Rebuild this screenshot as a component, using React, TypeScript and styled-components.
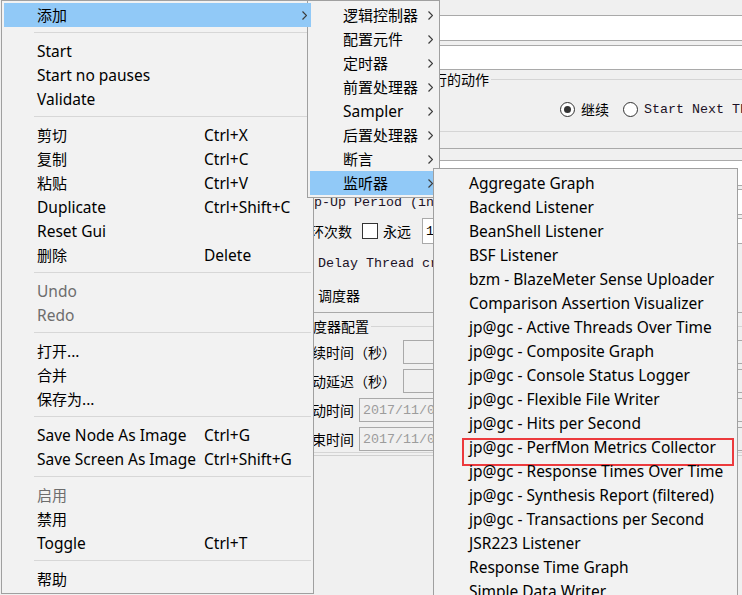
import React from "react";
import styled, { createGlobalStyle, css } from "styled-components";

const UI_FONT = `"Noto Sans", "Noto Sans CJK SC", sans-serif`;
const CJK_FONT = `"Noto Sans CJK SC", "Noto Sans", sans-serif`;
const MONO_FONT = `"Liberation Mono", "Noto Sans CJK SC", monospace`;

const HILITE = "#91c9f7";

const GlobalStyle = createGlobalStyle`
  * { box-sizing: border-box; }
  html, body { margin: 0; padding: 0; background: #f0f0f0; overflow: hidden; }
  #root { width: 742px; height: 595px; }
`;

type Entry =
  | { sep: true }
  | {
      sep?: false;
      text: string;
      keys?: string;
      arrow?: boolean;
      active?: boolean;
      disabled?: boolean;
      marked?: boolean;
    };

const SEP: Entry = { sep: true };

const mainMenu: Entry[] = [
  { text: "添加", arrow: true, active: true },
  SEP,
  { text: "Start" },
  { text: "Start no pauses" },
  { text: "Validate" },
  SEP,
  { text: "剪切", keys: "Ctrl+X" },
  { text: "复制", keys: "Ctrl+C" },
  { text: "粘贴", keys: "Ctrl+V" },
  { text: "Duplicate", keys: "Ctrl+Shift+C" },
  { text: "Reset Gui" },
  { text: "删除", keys: "Delete" },
  SEP,
  { text: "Undo", disabled: true },
  { text: "Redo", disabled: true },
  SEP,
  { text: "打开..." },
  { text: "合并" },
  { text: "保存为..." },
  SEP,
  { text: "Save Node As Image", keys: "Ctrl+G" },
  { text: "Save Screen As Image", keys: "Ctrl+Shift+G" },
  SEP,
  { text: "启用", disabled: true },
  { text: "禁用" },
  { text: "Toggle", keys: "Ctrl+T" },
  SEP,
  { text: "帮助" },
];

const addMenu: Entry[] = [
  { text: "逻辑控制器", arrow: true },
  { text: "配置元件", arrow: true },
  { text: "定时器", arrow: true },
  { text: "前置处理器", arrow: true },
  { text: "Sampler", arrow: true },
  { text: "后置处理器", arrow: true },
  { text: "断言", arrow: true },
  { text: "监听器", arrow: true, active: true },
];

const listenerMenu: Entry[] = [
  "Aggregate Graph",
  "Backend Listener",
  "BeanShell Listener",
  "BSF Listener",
  "bzm - BlazeMeter Sense Uploader",
  "Comparison Assertion Visualizer",
  "jp@gc - Active Threads Over Time",
  "jp@gc - Composite Graph",
  "jp@gc - Console Status Logger",
  "jp@gc - Flexible File Writer",
  "jp@gc - Hits per Second",
  "jp@gc - PerfMon Metrics Collector",
  "jp@gc - Response Times Over Time",
  "jp@gc - Synthesis Report (filtered)",
  "jp@gc - Transactions per Second",
  "JSR223 Listener",
  "Response Time Graph",
  "Simple Data Writer",
].map((text) => ({ text, marked: text.includes("PerfMon") }));

const isCjk = (s: string) => /[\u4e00-\u9fff]/.test(s);

/* ---------- background window (JMeter thread group form) ---------- */

const Window = styled.div`
  position: relative;
  display: flex;
  width: 742px;
  height: 595px;
  overflow: hidden;
  background: #f0f0f0;
`;

const TreePane = styled.div`
  flex: none;
  width: 280px;
  background: #f0f0f0;
`;

const FormPane = styled.div`
  flex: none;
  width: 540px;
  padding-left: 8px;
  display: flex;
  flex-direction: column;
`;

const Row = styled.div<{ $mt?: number; $h?: number }>`
  display: flex;
  align-items: center;
  flex: none;
  margin-top: ${({ $mt }) => $mt ?? 0}px;
  height: ${({ $h }) => $h ?? 26}px;
`;

const Label = styled.span<{ $ml?: number }>`
  flex: none;
  margin-left: ${({ $ml }) => $ml ?? 0}px;
  font-family: ${CJK_FONT};
  font-size: 14px;
  color: #000;
  white-space: nowrap;
`;

const MonoLabel = styled.span<{ $ml?: number }>`
  flex: none;
  margin-left: ${({ $ml }) => $ml ?? 0}px;
  font-family: ${MONO_FONT};
  font-size: 13.33px;
  color: #1c1226;
  white-space: nowrap;
`;

const TextField = styled.div<{ $disabled?: boolean; $gap?: number }>`
  flex: 1;
  align-self: stretch;
  display: flex;
  align-items: center;
  margin-left: ${({ $gap }) => $gap ?? 0}px;
  padding-left: 3px;
  border: 1px solid #a9a9a9;
  background: ${({ $disabled }) => ($disabled ? "#f0f0f0" : "#ffffff")};
  font-family: ${MONO_FONT};
  font-size: 13.33px;
  color: ${({ $disabled }) => ($disabled ? "#9c9c9c" : "#000")};
  white-space: nowrap;
  overflow: hidden;
`;

const GroupBox = styled.fieldset<{ $mt: number; $pt: number; $pb: number; $line: string }>`
  margin: ${({ $mt }) => $mt}px 0 0 0;
  padding: ${({ $pt }) => $pt}px 9px ${({ $pb }) => $pb}px 9px;
  min-width: 0;
  border: 1px solid ${({ $line }) => $line};
`;

const Legend = styled.legend<{ $indent: number }>`
  margin-left: ${({ $indent }) => $indent}px;
  padding: 0 2px;
  font-family: ${CJK_FONT};
  font-size: 14px;
  line-height: 17px;
  color: #000;
`;

const RadioRow = styled.div`
  display: flex;
  align-items: center;
  height: 20px;
  padding-left: 262px;
`;

const RadioOption = styled.label`
  display: flex;
  align-items: center;
  gap: 6px;
  margin-right: 14px;
  white-space: nowrap;
`;

const Radio = styled.span<{ $checked?: boolean }>`
  flex: none;
  display: inline-flex;
  align-items: center;
  justify-content: center;
  width: 15px;
  height: 15px;
  border: 1px solid #333;
  border-radius: 50%;
  background: #fff;

  &::after {
    content: "";
    display: ${({ $checked }) => ($checked ? "block" : "none")};
    width: 7px;
    height: 7px;
    border-radius: 50%;
    background: #333;
  }
`;

const Check = styled.span<{ $ml?: number }>`
  flex: none;
  width: 16px;
  height: 16px;
  margin-left: ${({ $ml }) => $ml ?? 0}px;
  border: 1px solid #333;
  background: #fff;
`;

const Rule = styled.div`
  flex: none;
  height: 1px;
  margin-top: 2px;
  background: #d0d0d0;
`;

/* ---------- popup menus ---------- */

const Popup = styled.div<{ $left: number; $top: number; $width: number; $z: number }>`
  position: absolute;
  left: ${({ $left }) => $left}px;
  top: ${({ $top }) => $top}px;
  width: ${({ $width }) => $width}px;
  z-index: ${({ $z }) => $z};
  padding: 2px;
  border: 1px solid #a0a0a0;
  background: #f2f2f2;
`;

/* the parent's highlighted row runs into the submenu's edge */
const SubPopup = styled(Popup)`
  &::before {
    content: "";
    position: absolute;
    left: -1px;
    top: 2px;
    width: 4px;
    height: 24px;
    background: ${HILITE};
  }
`;

const Item = styled.div<{ $active?: boolean; $disabled?: boolean; $marked?: boolean }>`
  position: relative;
  display: flex;
  align-items: center;
  height: 24px;
  padding-left: 33px;
  background: ${({ $active }) => ($active ? HILITE : "transparent")};
  color: ${({ $disabled }) => ($disabled ? "#6d6d6d" : "#000")};
  white-space: nowrap;

  ${({ $marked }) =>
    $marked &&
    css`
      &::after {
        content: "";
        position: absolute;
        left: 26px;
        right: 1px;
        top: 3px;
        height: 24px;
        border: 2px solid #ec3a3d;
      }
    `}
`;

const ItemText = styled.span<{ $cjk?: boolean; $width?: number }>`
  flex: none;
  width: ${({ $width }) => ($width ? `${$width}px` : "auto")};
  font-family: ${({ $cjk }) => ($cjk ? CJK_FONT : UI_FONT)};
  font-size: ${({ $cjk }) => ($cjk ? 15 : 15.5)}px;
  line-height: 24px;
`;

const Keys = styled.span`
  flex: none;
  font-family: ${UI_FONT};
  font-size: 15.5px;
  line-height: 24px;
`;

const Arrow = styled.svg`
  flex: none;
  margin-left: auto;
  margin-right: 4px;
`;

const Separator = styled.div`
  height: 1px;
  margin: 5px 0 6px 30px;
  background: #d7d7d7;
`;

const MenuEntries = ({ entries, labelWidth }: { entries: Entry[]; labelWidth?: number }) => (
  <>
    {entries.map((e, i) =>
      e.sep ? (
        <Separator key={i} />
      ) : (
        <Item key={i} $active={e.active} $disabled={e.disabled} $marked={e.marked}>
          <ItemText $cjk={isCjk(e.text)} $width={labelWidth}>
            {e.text}
          </ItemText>
          {e.keys && <Keys>{e.keys}</Keys>}
          {e.arrow && (
            <Arrow width="5" height="9" viewBox="0 0 5 9">
              <polyline points="0.5,0.5 4.5,4.5 0.5,8.5" fill="none" stroke="#3c3c3c" strokeWidth="1.2" />
            </Arrow>
          )}
        </Item>
      )
    )}
  </>
);

export default function App() {
  return (
    <>
      <GlobalStyle />
      <Window>
        <TreePane />
        <FormPane>
          <Row $mt={15} $h={26}>
            <Label>名称：</Label>
            <TextField $gap={6} />
          </Row>
          <Row $mt={4} $h={25}>
            <Label>注释：</Label>
            <TextField $gap={6} />
          </Row>

          <GroupBox $mt={1} $pt={11} $pb={12} $line="#d5d5d5">
            <Legend $indent={7}>在取样器错误后要执行的动作</Legend>
            <RadioRow>
              <RadioOption>
                <Radio $checked />
                <Label>继续</Label>
              </RadioOption>
              <RadioOption>
                <Radio />
                <MonoLabel>Start Next Thread Loop</MonoLabel>
              </RadioOption>
            </RadioRow>
          </GroupBox>

          <GroupBox $mt={8} $pt={3} $pb={4} $line="#a9a9a9">
            <Legend $indent={7}>线程属性</Legend>
            <Row>
              <Label>线程数：</Label>
              <TextField $gap={6} />
            </Row>
            <Row $mt={3}>
              <MonoLabel $ml={-8}>Ramp-Up Period (in seconds):</MonoLabel>
              <TextField $gap={6} />
            </Row>
            <Row $mt={3}>
              <Label $ml={-2}>循环次数</Label>
              <Check $ml={10} />
              <Label $ml={5}>永远</Label>
              <TextField $gap={11}>1</TextField>
            </Row>
            <Row $mt={6}>
              <Check />
              <MonoLabel $ml={4}>Delay Thread creation until needed</MonoLabel>
            </Row>
            <Row $mt={6}>
              <Check />
              <Label $ml={4}>调度器</Label>
            </Row>
          </GroupBox>

          <GroupBox $mt={5} $pt={5} $pb={1} $line="#d5d5d5">
            <Legend $indent={-1}>调度器配置</Legend>
            <Row $h={24}>
              <Label>持续时间（秒）</Label>
              <TextField $disabled $gap={7} />
            </Row>
            <Row $mt={5} $h={24}>
              <Label>启动延迟（秒）</Label>
              <TextField $disabled $gap={7} />
            </Row>
            <Row $mt={5} $h={24}>
              <Label>启动时间</Label>
              <TextField $disabled $gap={5}>2017/11/07 10:43:21</TextField>
            </Row>
            <Row $mt={5} $h={24}>
              <Label>结束时间</Label>
              <TextField $disabled $gap={5}>2017/11/07 10:43:21</TextField>
            </Row>
          </GroupBox>
          <Rule />
        </FormPane>

        <Popup $left={1} $top={0} $width={313} $z={1}>
          <MenuEntries entries={mainMenu} labelWidth={167} />
        </Popup>
        <SubPopup $left={307} $top={0} $width={133} $z={2}>
          <MenuEntries entries={addMenu} />
        </SubPopup>
        <Popup $left={433} $top={168} $width={305} $z={3}>
          <MenuEntries entries={listenerMenu} />
        </Popup>
      </Window>
    </>
  );
}
